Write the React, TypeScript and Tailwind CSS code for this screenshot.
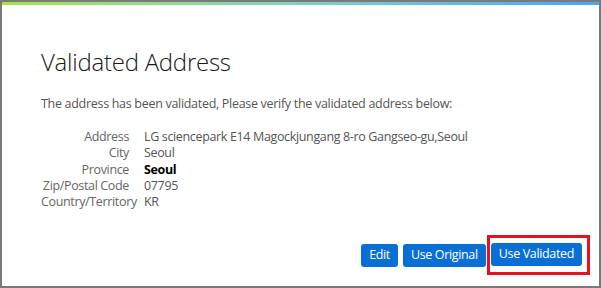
import React from "react";

export default function App() {
  const rows: [string, string, boolean][] = [
    ["Address", "LG sciencepark E14 Magockjungang 8-ro Gangseo-gu,Seoul", false],
    ["City", "Seoul", false],
    ["Province", "Seoul", true],
    ["Zip/Postal Code", "07795", false],
    ["Country/Territory", "KR", false],
  ];
  return (
    <div
      className="w-[601px] h-[288px] bg-white border-2 border-[#7a7a7a] flex flex-col"
      style={{ fontFamily: '"Open Sans", "Noto Sans", sans-serif' }}
    >
      <div className="h-[3px] bg-gradient-to-r from-[#a8e23a] via-[#7dd3c0] to-[#4aa3ff]" />
      <div className="flex-1 flex flex-col pl-[39px] pr-[9px]">
        <h1 className="mt-[42px] text-[24px] leading-[30px] font-light text-[#1a1a1a] tracking-[-0.25px]">
          Validated Address
        </h1>
        <p className="mt-[19px] text-[12.5px] leading-[16px] text-[#555] tracking-[-0.3px]">
          The address has been validated, Please verify the validated address below:
        </p>
        <div className="mt-[17px] grid grid-cols-[88px_1fr] gap-x-[15px] text-[12.5px] leading-[16.3px] tracking-[-0.35px]">
          {rows.map(([k, v, b]) => (
            <React.Fragment key={k}>
              <div className="text-right text-[#666]">{k}</div>
              <div className={b ? "font-bold text-black" : "text-[#555]"}>{v}</div>
            </React.Fragment>
          ))}
        </div>
        <div className="mt-auto mb-[11px] flex justify-end items-center">
          <button className="h-[23px] px-[8px] rounded-[3px] bg-[#0a6fd4] text-white text-[12.5px] tracking-[-0.35px]">
            Edit
          </button>
          <button className="ml-[5px] h-[23px] px-[8px] rounded-[3px] bg-[#0a6fd4] text-white text-[12.5px] tracking-[-0.35px]">
            Use Original
          </button>
          <div className="ml-[1px] border-[3px] border-[#e5141c] pt-[5px] pb-[6px] pl-[1px] pr-[5px]">
            <button className="h-[23px] px-[8px] rounded-[3px] bg-[#0a6fd4] text-white text-[12.5px] tracking-[-0.35px] block">
              Use Validated
            </button>
          </div>
        </div>
      </div>
    </div>
  );
}
